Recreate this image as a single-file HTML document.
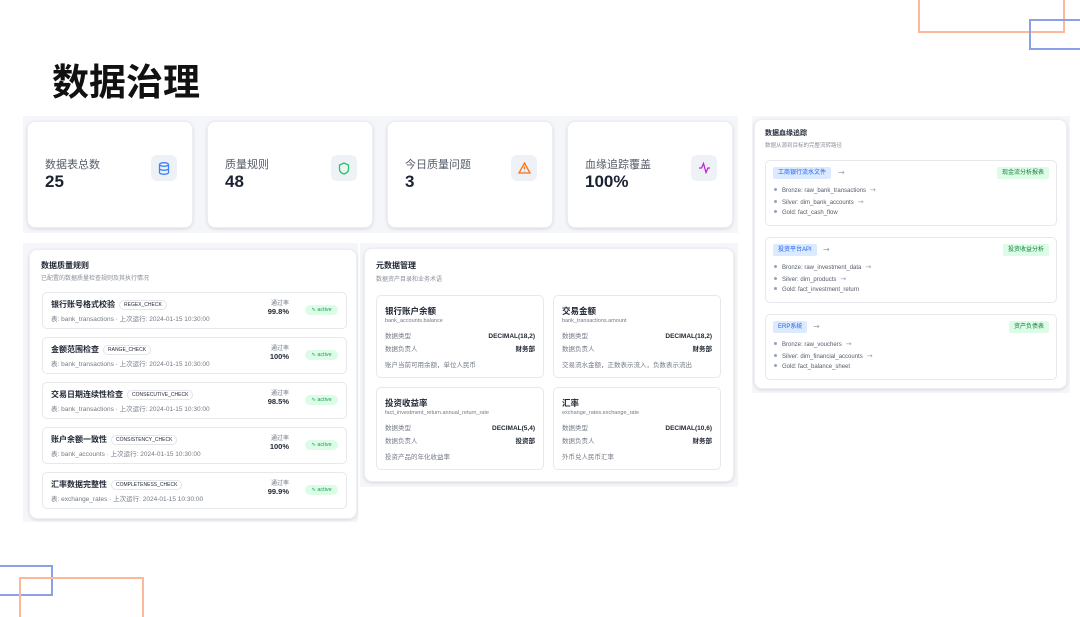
<!DOCTYPE html>
<html><head><meta charset="utf-8"><style>
*{box-sizing:border-box;margin:0;padding:0}
body{width:1080px;height:607px;background:#fff;position:relative;overflow:hidden;font-family:"Liberation Sans","Noto Sans CJK SC",sans-serif;color:#1e2533}
.a{position:absolute}
.bg{background:#f4f6f9}
.card{position:absolute;background:#fff;border-radius:8px;box-shadow:0 1px 3px rgba(0,0,0,.12);border:1px solid #eceef2}
.sc .l{position:absolute;left:17px;top:34px;font-size:11px;color:#555c68}
.sc .v{position:absolute;left:17px;top:50px;font-size:17px;font-weight:bold;color:#1b2230}
.sc .i{position:absolute;left:123px;top:33px;width:26px;height:26px;border-radius:6px;background:#eef2f7;display:flex;align-items:center;justify-content:center}
.h{font-size:8px;font-weight:bold;color:#1e2533}
.s{font-size:6px;color:#8a909a}
.ri{position:absolute;left:12px;width:305px;height:37px;border:1px solid #e6e8ec;border-radius:5px;background:#fff}
.ri .t{position:absolute;left:8px;top:6px;font-size:8px;font-weight:bold;white-space:nowrap}
.ri .t span{font-size:5px;font-weight:normal;border:1px solid #e3e5e9;border-radius:6px;padding:1px 4px;margin-left:4px;vertical-align:1px}
.ri .d{position:absolute;left:8px;top:20px;font-size:6.5px;color:#737a85;white-space:nowrap}
.ri .p{position:absolute;right:57px;top:7px;font-size:6px;color:#737a85;text-align:right;line-height:8px}
.ri .p b{font-size:7.5px;color:#1e2533}
.ri .g{position:absolute;right:8px;top:12px;width:33px;height:10px;border-radius:5px;background:#dcfce7;color:#16a34a;font-size:5.5px;line-height:10px;text-align:center}
.mc{position:absolute;width:168px;height:83px;border:1px solid #e6e8ec;border-radius:5px;background:#fff}
.mc .t{position:absolute;left:8px;top:9px;font-size:8.5px;font-weight:bold}
.mc .f{position:absolute;left:8px;top:22px;font-size:5.5px;color:#737a85}
.mc .r{position:absolute;left:8px;right:8px;font-size:6.5px;line-height:9px;color:#737a85;display:flex;justify-content:space-between;align-items:baseline}
.mc .r b{color:#1e2533;line-height:9px}
.lc{position:absolute;left:10px;width:292px;height:66px;border:1px solid #e6e8ec;border-radius:5px;background:#fff}
.lc .src{position:absolute;left:7px;top:6px;height:12px;padding:0 5px;background:#dbeafe;color:#2563eb;font-size:6px;line-height:12px;border-radius:2px}
.lc .tg{position:absolute;right:7px;top:6px;height:12px;padding:0 5px;background:#dcfce7;color:#15803d;font-size:6px;line-height:12px;border-radius:2px}
.ar{font-family:"DejaVu Sans",sans-serif}
.lc .ar{position:absolute;top:6px;font-size:8px;line-height:12px;color:#94a3b8}
.lc .ln{position:absolute;left:8px;font-size:6px;color:#555c68;white-space:nowrap}
.lc .ln:before{content:"";display:inline-block;width:3px;height:3px;border-radius:2px;background:#94a3b8;margin-right:5px;vertical-align:1px}
.lc .ln i{font-style:normal;color:#94a3b8;margin-left:4px;font-family:"DejaVu Sans",sans-serif;font-size:7px}
</style></head><body>
<div class="a" style="left:918px;top:-2px;width:147px;height:35px;border:2px solid #fdb899;border-top:none"></div>
<div class="a" style="left:1029px;top:19px;width:60px;height:31px;border:2px solid #8da0e6;border-right:none"></div>
<div class="a" style="left:-10px;top:565px;width:63px;height:31px;border:2px solid #8da0e6;border-left:none"></div>
<div class="a" style="left:19px;top:577px;width:125px;height:40px;border:2px solid #fdb899;border-bottom:none"></div>
<div class="a" style="left:52px;top:52px;font-size:37px;font-weight:bold;color:#111">数据治理</div>

<div class="a bg" style="left:23px;top:116px;width:715px;height:117px"></div>
<div class="card sc" style="left:27px;top:121px;width:166px;height:107px"><div class="l">数据表总数</div><div class="v">25</div><div class="i"><svg width="12" height="13" viewBox="0 0 12 13" fill="none" stroke="#3b82f6" stroke-width="1.3"><ellipse cx="6" cy="2.5" rx="4.5" ry="1.8"/><path d="M1.5 2.5v8c0 1 2 1.8 4.5 1.8s4.5-.8 4.5-1.8v-8M1.5 6.5c0 1 2 1.8 4.5 1.8s4.5-.8 4.5-1.8"/></svg></div></div>
<div class="card sc" style="left:207px;top:121px;width:166px;height:107px"><div class="l">质量规则</div><div class="v">48</div><div class="i"><svg width="12" height="13" viewBox="0 0 12 13" fill="none" stroke="#22c55e" stroke-width="1.3"><path d="M6 1L10.5 3v4c0 2.5-2 4.3-4.5 5C3.5 11.3 1.5 9.5 1.5 7V3z"/></svg></div></div>
<div class="card sc" style="left:387px;top:121px;width:166px;height:107px"><div class="l">今日质量问题</div><div class="v">3</div><div class="i"><svg width="13" height="12" viewBox="0 0 13 12" fill="none" stroke="#f97316" stroke-width="1.3"><path d="M6.5 1L12 11H1z M6.5 4.5v3 M6.5 9v.5"/></svg></div></div>
<div class="card sc" style="left:567px;top:121px;width:166px;height:107px"><div class="l">血缘追踪覆盖</div><div class="v">100%</div><div class="i"><svg width="13" height="12" viewBox="0 0 13 12" fill="none" stroke="#c026d3" stroke-width="1.3"><path d="M1 6h2.5l2-4.5 2.5 9 2-4.5H12"/></svg></div></div>

<div class="a bg" style="left:23px;top:243px;width:335px;height:279px"></div>
<div class="card" style="left:29px;top:249px;width:328px;height:270px">
<div class="a h" style="left:11px;top:10px">数据质量规则</div>
<div class="a s" style="left:11px;top:23px">已配置的数据质量检查规则及其执行情况</div>
<div class="ri" style="top:42px"><div class="t">银行账号格式校验<span>REGEX_CHECK</span></div><div class="d">表: bank_transactions · 上次运行: 2024-01-15 10:30:00</div><div class="p">通过率<br><b>99.8%</b></div><div class="g">∿ active</div></div>
<div class="ri" style="top:87px"><div class="t">金额范围检查<span>RANGE_CHECK</span></div><div class="d">表: bank_transactions · 上次运行: 2024-01-15 10:30:00</div><div class="p">通过率<br><b>100%</b></div><div class="g">∿ active</div></div>
<div class="ri" style="top:132px"><div class="t">交易日期连续性检查<span>CONSECUTIVE_CHECK</span></div><div class="d">表: bank_transactions · 上次运行: 2024-01-15 10:30:00</div><div class="p">通过率<br><b>98.5%</b></div><div class="g">∿ active</div></div>
<div class="ri" style="top:177px"><div class="t">账户余额一致性<span>CONSISTENCY_CHECK</span></div><div class="d">表: bank_accounts · 上次运行: 2024-01-15 10:30:00</div><div class="p">通过率<br><b>100%</b></div><div class="g">∿ active</div></div>
<div class="ri" style="top:222px"><div class="t">汇率数据完整性<span>COMPLETENESS_CHECK</span></div><div class="d">表: exchange_rates · 上次运行: 2024-01-15 10:30:00</div><div class="p">通过率<br><b>99.9%</b></div><div class="g">∿ active</div></div>
</div>

<div class="a bg" style="left:360px;top:243px;width:378px;height:244px"></div>
<div class="card" style="left:364px;top:248px;width:370px;height:234px">
<div class="a h" style="left:11px;top:11px">元数据管理</div>
<div class="a s" style="left:11px;top:25px">数据资产目录和业务术语</div>
<div class="mc" style="left:11px;top:46px"><div class="t">银行账户余额</div><div class="f">bank_accounts.balance</div><div class="r" style="top:36px">数据类型<b>DECIMAL(18,2)</b></div><div class="r" style="top:49px">数据负责人<b>财务部</b></div><div class="r" style="top:65px">账户当前可用余额，单位人民币</div></div>
<div class="mc" style="left:188px;top:46px"><div class="t">交易金额</div><div class="f">bank_transactions.amount</div><div class="r" style="top:36px">数据类型<b>DECIMAL(18,2)</b></div><div class="r" style="top:49px">数据负责人<b>财务部</b></div><div class="r" style="top:65px">交易流水金额，正数表示流入，负数表示流出</div></div>
<div class="mc" style="left:11px;top:138px"><div class="t">投资收益率</div><div class="f">fact_investment_return.annual_return_rate</div><div class="r" style="top:36px">数据类型<b>DECIMAL(5,4)</b></div><div class="r" style="top:49px">数据负责人<b>投资部</b></div><div class="r" style="top:65px">投资产品的年化收益率</div></div>
<div class="mc" style="left:188px;top:138px"><div class="t">汇率</div><div class="f">exchange_rates.exchange_rate</div><div class="r" style="top:36px">数据类型<b>DECIMAL(10,6)</b></div><div class="r" style="top:49px">数据负责人<b>财务部</b></div><div class="r" style="top:65px">外币兑人民币汇率</div></div>
</div>

<div class="a bg" style="left:752px;top:116px;width:318px;height:277px"></div>
<div class="card" style="left:754px;top:119px;width:313px;height:270px">
<div class="a h" style="left:10px;top:8px;font-size:7px">数据血缘追踪</div>
<div class="a s" style="left:10px;top:21px;font-size:5.5px">数据从源到目标的完整流转路径</div>
<div class="lc" style="top:40px"><div class="src">工商银行流水文件</div><div class="ar" style="left:72px">→</div><div class="tg">现金流分析报表</div><div class="ln" style="top:25px">Bronze: raw_bank_transactions<i>→</i></div><div class="ln" style="top:37px">Silver: dim_bank_accounts<i>→</i></div><div class="ln" style="top:49px">Gold: fact_cash_flow</div></div>
<div class="lc" style="top:117px"><div class="src">投资平台API</div><div class="ar" style="left:57px">→</div><div class="tg">投资收益分析</div><div class="ln" style="top:25px">Bronze: raw_investment_data<i>→</i></div><div class="ln" style="top:37px">Silver: dim_products<i>→</i></div><div class="ln" style="top:49px">Gold: fact_investment_return</div></div>
<div class="lc" style="top:194px"><div class="src">ERP系统</div><div class="ar" style="left:47px">→</div><div class="tg">资产负债表</div><div class="ln" style="top:25px">Bronze: raw_vouchers<i>→</i></div><div class="ln" style="top:37px">Silver: dim_financial_accounts<i>→</i></div><div class="ln" style="top:49px">Gold: fact_balance_sheet</div></div>
</div>
</body></html>
